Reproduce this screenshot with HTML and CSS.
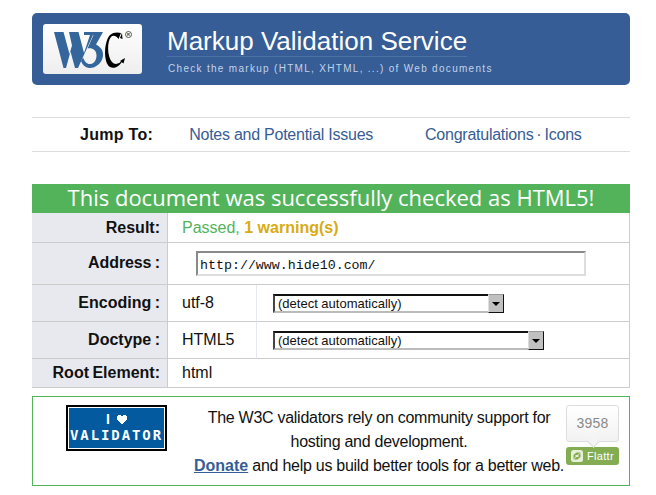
FILE: index.html
```html
<!DOCTYPE html>
<html lang="en">
<head>
<meta charset="utf-8">
<title>Markup Validation Service</title>
<link rel="stylesheet" href="styles.css">
</head>
<body>
<header class="banner">
  <a class="logo" href="#">
    <svg width="99" height="50" viewBox="0 0 99 50" role="img" aria-label="W3C">
      <path class="blue" d="M11 8H20.500L26.500 30 29 21.500 26 8H35.500L41 29 47 11H50L35 44H32L27.500 27.500 23 44H20.500Z"/>
      <path class="blue" d="M41 8H60L53 20.500C58 23 60.500 27 60 32 59 39.500 52 44.500 46 44 42 43.500 39.500 41 38 37L40 33.500C41.500 37.500 44 40.500 47.500 40 51.500 39.500 53.500 35.500 53.500 31.500 53.500 26 49 23.500 44.500 24.500L50.500 11H41Z"/>
      <path class="black" d="M78 9 75.500 15C73 11.500 70 11 68 13 64 17.500 64 32 69 38 72 41.500 77 40 80 35 78 42 71 45.500 67 43 60 38.500 61 17 67 11 70 8 75 8 78 9Z"/>
      <path class="black" d="M77 14 79 9 79.500 15ZM77 37 82 34 80.500 39.500Z"/>
      <circle class="mark" cx="85.500" cy="10.500" r="3"/>
      <text class="reg" x="85.500" y="12" text-anchor="middle">R</text>
    </svg>
  </a>
  <div class="titles">
    <h1>Markup Validation Service</h1>
    <p>Check the markup (HTML, XHTML, ...) of Web documents</p>
  </div>
</header>

<nav class="jump">
  <strong>Jump To:</strong>
  <a class="notes" href="#">Notes and Potential Issues</a>
  <span class="right"><a href="#">Congratulations</a> · <a href="#">Icons</a></span>
</nav>

<h2 class="success">This document was successfully checked as HTML5!</h2>

<table class="results">
  <colgroup><col class="c1"><col class="c2"><col class="c3"></colgroup>
  <tr class="r-result">
    <th>Result:</th>
    <td colspan="2"><span class="passed">Passed,</span> <strong class="warn">1 warning(s)</strong></td>
  </tr>
  <tr class="r-address">
    <th class="th-up">Address :</th>
    <td colspan="2"><input class="address" type="text" value="http://www.hide10.com/"></td>
  </tr>
  <tr class="r-select">
    <th>Encoding :</th>
    <td class="val">utf-8</td>
    <td class="sel"><span class="select short"><span>(detect automatically)</span><i class="arrow"></i></span></td>
  </tr>
  <tr class="r-select">
    <th>Doctype :</th>
    <td class="val">HTML5</td>
    <td class="sel"><span class="select long"><span>(detect automatically)</span><i class="arrow"></i></span></td>
  </tr>
  <tr class="r-root">
    <th>Root Element:</th>
    <td colspan="2">html</td>
  </tr>
</table>

<section class="donate">
  <div class="badge">
    <span class="b1">I<svg class="heart" width="10" height="10" viewBox="0 0 10 10" shape-rendering="crispEdges"><path d="M1 0H4V1H6V0H9V1H10V5H9V6H8V7H7V8H6V9H4V8H3V7H2V6H1V5H0V1H1Z" fill="#fff"/></svg></span>
    <span class="b2">VALIDATOR</span>
  </div>
  <p>The W3C validators rely on community support for<br>hosting and development.<br><a href="#">Donate</a> and help us build better tools for a better web.</p>
  <div class="flattr">
    <div class="count">3958</div>
    <div class="fbtn">
      <svg width="12" height="12" viewBox="0 0 12 12"><rect width="12" height="12" rx="2.500" fill="#e6efd8"/><path d="M2.500 9V5L5.500 2.500H9.500L6.500 5H4.500V7ZM9.500 3V7L6.500 9.500H2.500L5.500 7H7.500V5Z" fill="#84ac51"/></svg>
      <span>Flattr</span>
    </div>
  </div>
</section>
</body>
</html>
```
FILE: styles.css
```css
* { box-sizing: border-box; }
html, body { margin: 0; background: #fff; }
body {
  width: 656px;
  height: 495px;
  overflow: hidden;
  padding: 13px 26px 0 32px;
  font-family: "Liberation Sans", Arial, sans-serif;
  color: #111;
}
.banner {
  height: 72px;
  background: #365d95;
  border-radius: 5px;
  display: flex;
  align-items: flex-start;
  padding: 11px 0 0 11px;
}
.logo {
  display: block;
  width: 99px;
  height: 50px;
  border-radius: 3px;
  background: linear-gradient(#fff, #eee);
}
.logo svg { display: block; }
.blue { fill: #34659b; }
.black { fill: #000; }
.mark { fill: none; stroke: #333; stroke-width: .8; }
.reg { font: bold 4px "Liberation Sans", sans-serif; fill: #333; }
.titles { margin-left: 25px; flex: 1; }
.titles h1 {
  display: table;
  margin: 0;
  height: 33px;
  padding-top: 2px;
  font-size: 26px;
  font-weight: normal;
  line-height: 30px;
  color: #fff;
  white-space: nowrap;
  border-bottom: 1px solid #4d72a6;
}
.titles p {
  margin: 5px 0 0 1px;
  font-size: 10px;
  line-height: 13px;
  letter-spacing: 1.300px;
  color: #c3d3ea;
  white-space: nowrap;
}
.jump {
  margin-top: 32px;
  height: 35px;
  border-top: 1px solid #ddd;
  border-bottom: 1px solid #ddd;
  display: flex;
  align-items: center;
  font-size: 16px;
  white-space: nowrap;
}
.jump strong { margin-left: 48px; letter-spacing: .3px; }
.jump a { color: #365d95; text-decoration: none; letter-spacing: -.25px; }
.notes { margin-left: 36px; }
.right { margin-left: 52px; color: #365d95; word-spacing: -1.500px; }
.success {
  margin: 32px 0 0;
  height: 29px;
  background: #53b35b;
  color: #fff;
  font: normal 22px/26px "Open Sans", sans-serif;
  text-align: center;
  white-space: nowrap;
}
.results {
  width: 598px;
  border-collapse: separate;
  border-spacing: 0;
  table-layout: fixed;
  font-size: 16px;
}
.c1 { width: 135px; }
.c2 { width: 90px; }
.c3 { width: 373px; }
.results th {
  background: #e8e9ee;
  text-align: right;
  padding: 0 7px 0 0;
  border-bottom: 1px solid #ccc;
  white-space: nowrap;
  word-spacing: -1px;
}
.results .th-up { padding-bottom: 2px; letter-spacing: -.1px; }
.results td {
  padding: 0 0 0 14px;
  border-bottom: 1px solid #ccc;
}
.results tr > td:first-of-type { border-left: 1px solid #ccc; }
.results tr > td:last-child { border-right: 1px solid #ccc; }
.results .val { border-right: 1px solid #e6e8f0; }
.results .sel { padding-left: 16px; }
.r-result { height: 30px; }
.r-address { height: 42px; }
.r-select { height: 37px; }
.r-root { height: 29px; }
.passed { color: #53b35b; }
.warn { color: #d9ab13; }
.address {
  display: block;
  margin-left: 14px;
  width: 390px;
  height: 25px;
  padding: 4px 2px 0;
  border: 2px solid;
  border-color: #8a8a8a #ddd #ddd #8a8a8a;
  font: 13.300px "Liberation Mono", monospace;
  color: #111;
}
.select {
  display: flex;
  height: 19px;
  border: 2px solid;
  border-color: #111 #bbb #bbb #444;
  font-size: 13px;
  line-height: 15px;
  padding-left: 3px;
  justify-content: space-between;
}
.select.short { width: 231px; }
.select.long { width: 271px; }
.arrow {
  width: 16px;
  height: 19px;
  margin-top: -2px;
  margin-right: -2px;
  background: #c0c0c0;
  border: 1px solid;
  border-color: #999 #111 #111 #ddd;
  position: relative;
  flex: none;
}
.arrow::after {
  content: "";
  position: absolute;
  left: 3px;
  top: 7px;
  border: 4px solid transparent;
  border-top: 4px solid #000;
  border-bottom: 0;
}
.donate {
  margin-top: 8px;
  height: 90px;
  border: 1px solid #53b35b;
  display: flex;
  align-items: flex-start;
  font-size: 16px;
}
.badge {
  margin: 8px 0 0 33px;
  width: 101px;
  height: 46px;
  padding-bottom: 2px;
  background: #035a9f;
  border: 2px solid #000;
  box-shadow: inset 0 0 0 1px #fff;
  color: #fff;
  font: bold 14px/15px "DejaVu Sans Mono", monospace;
  letter-spacing: 1.900px;
  text-align: center;
  display: flex;
  flex-direction: column;
  justify-content: center;
  gap: 1px;
}
.badge span { display: block; white-space: nowrap; }
.badge .b1 { font-family: "Liberation Sans", sans-serif; letter-spacing: 0; }
.heart { margin-left: 7px; vertical-align: -1px; }
.donate p {
  margin: 9px 0 0 26px;
  width: 372px;
  line-height: 24px;
  letter-spacing: -.27px;
  text-align: center;
  white-space: nowrap;
}
.donate p a { color: #365d95; font-weight: bold; letter-spacing: 0; }
.flattr { margin: 8px 0 0 1px; width: 53px; }
.count {
  height: 37px;
  border: 1px solid #ddd;
  border-radius: 3px;
  background: linear-gradient(#fff, #f2f2f2);
  color: #8a8a8a;
  font-size: 14px;
  letter-spacing: .2px;
  line-height: 35px;
  text-align: center;
  position: relative;
}
.count::after {
  content: "";
  position: absolute;
  left: 22px;
  bottom: -5px;
  width: 8px;
  height: 8px;
  background: #f4f4f4;
  border-right: 1px solid #ddd;
  border-bottom: 1px solid #ddd;
  transform: rotate(45deg);
}
.fbtn {
  margin-top: 5px;
  height: 18px;
  border-radius: 3px;
  background: #84ac51;
  color: #fff;
  font-size: 11px;
  letter-spacing: .3px;
  display: flex;
  align-items: center;
  gap: 4px;
  padding-left: 5px;
}
```
